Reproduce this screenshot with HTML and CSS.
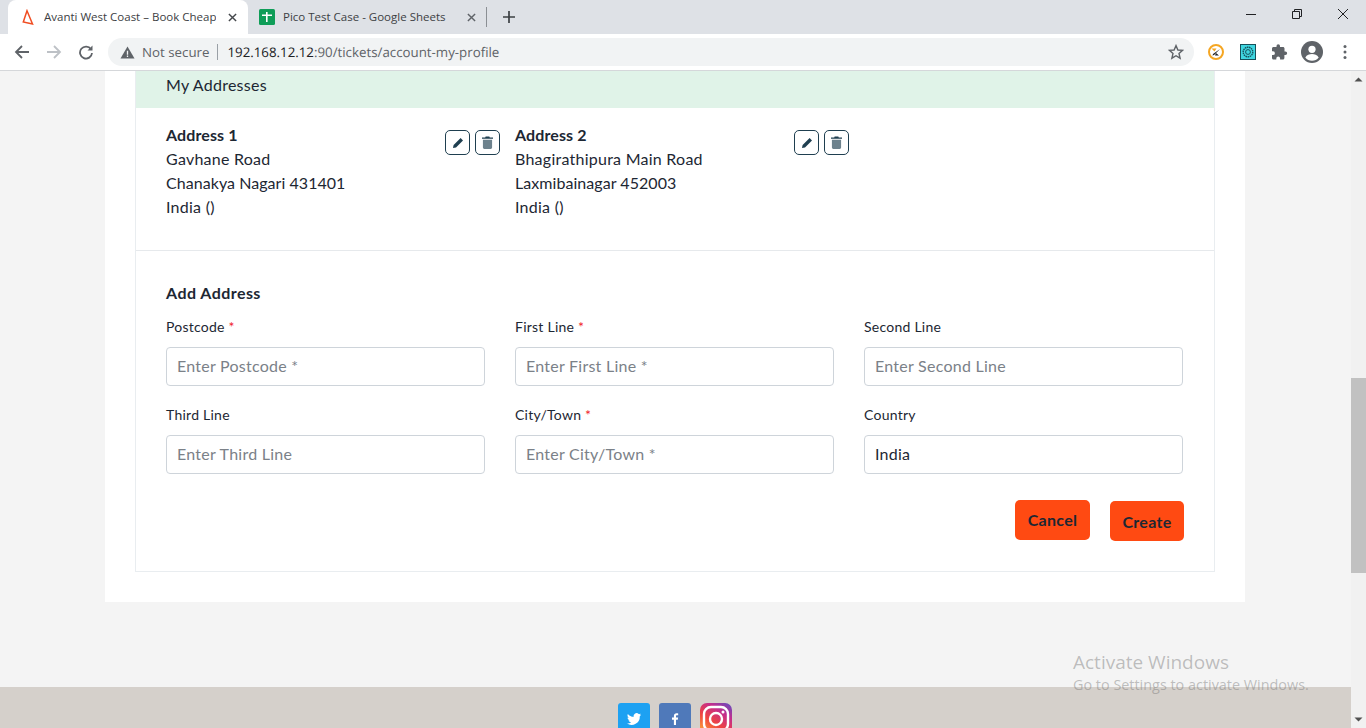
FILE: index.html
```html
<!DOCTYPE html>
<html lang="en">
<head>
    <meta charset="UTF-8">
    <meta name="viewport" content="width=device-width, initial-scale=1.0">
    <title>Avanti West Coast – My Profile</title>
    <link rel="stylesheet" href="styles.css">
</head>
<body>
    <!-- browser tabs -->
    <div class="tab-strip">
        <div class="tab tab-active">
            <svg class="favicon" viewBox="0 0 16 16"><path d="M7 1.800 3.300 13 12.500 15z" fill="none" stroke="#f04e23" stroke-width="1.500"/></svg>
            <span class="tab-title">Avanti West Coast – Book Cheap</span>
            <svg class="tab-close" viewBox="0 0 10 10"><path d="M1 1l8 8M9 1l-8 8" stroke="#45484c" stroke-width="1.600"/></svg>
        </div>
        <div class="tab tab-second">
            <svg class="favicon" viewBox="0 0 16 16"><rect width="16" height="16" rx="1.500" fill="#0f9d58"/><path d="M7 3h1.600v2.500H13v1.600H8.600V13H7V7.100H3V5.500h4z" fill="#fff"/></svg>
            <span class="tab-title">Pico Test Case - Google Sheets</span>
            <svg class="tab-close" viewBox="0 0 10 10"><path d="M1 1l8 8M9 1l-8 8" stroke="#5f6368" stroke-width="1.600"/></svg>
        </div>
        <div class="tab-sep"></div>
        <svg class="new-tab" viewBox="0 0 12 12"><path d="M6 0v12M0 6h12" stroke="#3c4043" stroke-width="1.700"/></svg>
        <div class="window-controls">
            <svg viewBox="0 0 12 12"><path d="M1 6.500h10" stroke="#202124"/></svg>
            <svg viewBox="0 0 12 12"><path d="M1.500 3.500h7v7h-7zM3.500 3.500v-2h7v7h-2" fill="none" stroke="#202124"/></svg>
            <svg viewBox="0 0 12 12"><path d="M1 1l10 10M11 1L1 11" stroke="#202124"/></svg>
        </div>
    </div>

    <!-- address bar -->
    <div class="toolbar">
        <svg class="nav-icon" viewBox="0 0 16 16"><path d="M15 8H2M8 2 2 8l6 6" fill="none" stroke="#5f6368" stroke-width="1.800"/></svg>
        <svg class="nav-icon" viewBox="0 0 16 16"><path d="M1 8h13M8 2l6 6-6 6" fill="none" stroke="#bdc1c6" stroke-width="1.800"/></svg>
        <svg class="nav-icon" viewBox="0 0 16 16"><path d="M13 5.200A6 6 0 1 0 14 9" fill="none" stroke="#5f6368" stroke-width="1.800"/><path d="M14.500 1.500v5h-5z" fill="#5f6368"/></svg>
        <div class="omnibox">
            <svg class="warn-icon" viewBox="0 0 16 16"><path d="M8 1.500 15.500 14.500H.5z" fill="#5f6368"/><path d="M7.300 6h1.400v4.500H7.300zM7.300 11.300h1.400v1.400H7.300z" fill="#f1f3f4"/></svg>
            <span class="not-secure">Not secure</span>
            <span class="omni-sep"></span>
            <span class="url"><b>192.168.12.12</b>:90/tickets/account-my-profile</span>
            <svg class="star" viewBox="0 0 16 16"><path d="M8 1.600l1.900 4.400 4.700.4-3.600 3.100 1.100 4.700L8 11.700l-4.100 2.500L5 9.500 1.400 6.400l4.700-.4z" fill="none" stroke="#5f6368" stroke-width="1.400"/></svg>
        </div>
        <div class="extensions">
            <svg class="ext" viewBox="0 0 16 16"><circle cx="8" cy="8" r="7" fill="#fff" stroke="#f5a623" stroke-width="2"/><path d="M3.500 4.500h5l-2 3z" fill="#f5a623"/><path d="M12 5 6 11l-1.500.5L5 10z M8 9l3 2.500H7z" fill="#202124"/></svg>
            <svg class="ext" viewBox="0 0 16 16"><rect x=".5" y=".5" width="15" height="15" fill="#3fd6e0" stroke="#17505a"/><circle cx="8" cy="8" r="4.800" fill="none" stroke="#17505a" stroke-width="1.400" stroke-dasharray="1.500 .6"/><circle cx="8" cy="8" r="2.400" fill="none" stroke="#17505a"/></svg>
            <svg class="ext" viewBox="0 0 16 16"><path d="M13.500 7.500h-1v-3c0-.8-.7-1.500-1.500-1.500H8V2a1.750 1.750 0 0 0-3.500 0v1h-3C.7 3 0 3.700 0 4.500v2.800h1a1.900 1.900 0 0 1 0 3.800H0v2.800c0 .8.700 1.500 1.500 1.500h2.800v-1a1.900 1.900 0 0 1 3.800 0v1h2.800c.8 0 1.500-.7 1.500-1.500V11h1a1.750 1.750 0 0 0 0-3.500z" fill="#5f6368"/></svg>
            <svg class="avatar" viewBox="0 0 22 22"><circle cx="11" cy="11" r="11" fill="#5f6368"/><circle cx="11" cy="8.300" r="3.600" fill="#fff"/><path d="M4.300 16.600c1.500-2.600 4.200-3.500 6.700-3.500s5.200.9 6.700 3.500a8.600 8.600 0 0 1-13.400 0z" fill="#fff"/></svg>
            <svg class="menu-dots" viewBox="0 0 4 16"><circle cx="2" cy="2.500" r="1.500" fill="#5f6368"/><circle cx="2" cy="8" r="1.500" fill="#5f6368"/><circle cx="2" cy="13.500" r="1.500" fill="#5f6368"/></svg>
        </div>
    </div>

    <div class="viewport">
        <div class="page">
            <div class="container">
                <div class="card">
                    <div class="card-head">My Addresses</div>
                    <div class="address-list">
                        <div class="address">
                            <div class="address-text">
                                <strong>Address 1</strong>
                                <div>Gavhane Road</div>
                                <div class="address-postal">Chanakya Nagari 431401</div>
                                <div>India ()</div>
                            </div>
                            <div class="address-actions">
                                <button class="icon-btn"><svg viewBox="0 0 12 12"><path d="M8.600 1 11 3.400 4 10.400 1 11l.6-3z" fill="#1f3f50"/></svg></button>
                                <button class="icon-btn"><svg class="trash" viewBox="0 0 12 14"><path d="M4 .5h4l.5 1H12V3H0V1.500h3.500z" fill="#1f3f50"/><path d="M1 4h10v8.500a1.500 1.500 0 0 1-1.500 1.500h-7A1.500 1.500 0 0 1 1 12.500z" fill="#1f3f50" opacity=".65"/></svg></button>
                            </div>
                        </div>
                        <div class="address">
                            <div class="address-text">
                                <strong>Address 2</strong>
                                <div>Bhagirathipura Main Road</div>
                                <div class="address-postal">Laxmibainagar 452003</div>
                                <div>India ()</div>
                            </div>
                            <div class="address-actions">
                                <button class="icon-btn"><svg viewBox="0 0 12 12"><path d="M8.600 1 11 3.400 4 10.400 1 11l.6-3z" fill="#1f3f50"/></svg></button>
                                <button class="icon-btn"><svg class="trash" viewBox="0 0 12 14"><path d="M4 .5h4l.5 1H12V3H0V1.500h3.500z" fill="#1f3f50"/><path d="M1 4h10v8.500a1.500 1.500 0 0 1-1.500 1.500h-7A1.500 1.500 0 0 1 1 12.500z" fill="#1f3f50" opacity=".65"/></svg></button>
                            </div>
                        </div>
                    </div>
                    <form class="add-address">
                        <h3>Add Address</h3>
                        <div class="field-grid">
                            <div class="field">
                                <label>Postcode <span class="req">*</span></label>
                                <input type="text" placeholder="Enter Postcode *">
                            </div>
                            <div class="field">
                                <label>First Line <span class="req">*</span></label>
                                <input type="text" placeholder="Enter First Line *">
                            </div>
                            <div class="field">
                                <label>Second Line</label>
                                <input type="text" placeholder="Enter Second Line">
                            </div>
                            <div class="field">
                                <label>Third Line</label>
                                <input type="text" placeholder="Enter Third Line">
                            </div>
                            <div class="field">
                                <label>City/Town <span class="req">*</span></label>
                                <input type="text" placeholder="Enter City/Town *">
                            </div>
                            <div class="field">
                                <label>Country</label>
                                <input type="text" value="India">
                            </div>
                        </div>
                        <div class="form-actions">
                            <button type="button" class="btn btn-cancel">Cancel</button>
                            <button type="button" class="btn btn-create">Create</button>
                        </div>
                    </form>
                </div>
            </div>
            <div class="footer">
                <div class="social social-tw">
                    <svg viewBox="0 0 16 16"><path d="M15 3.500c-.5.300-1.100.400-1.700.500.6-.4 1-.9 1.200-1.600-.6.300-1.200.6-1.800.7a2.900 2.900 0 0 0-5 2.700C5.300 5.700 3.200 4.600 1.900 2.900c-.8 1.300-.4 3 .9 3.900-.5 0-.9-.1-1.300-.4 0 1.400 1 2.600 2.300 2.900-.4.100-.9.100-1.300 0 .4 1.200 1.500 2 2.700 2A5.900 5.900 0 0 1 1 12.500 8.300 8.300 0 0 0 13.800 5.200c.5-.4 1-1 1.200-1.700z" fill="#fff"/></svg>
                </div>
                <div class="social social-fb">
                    <svg viewBox="0 0 16 16"><path d="M9 14V8.700h1.800l.3-2.100H9V5.300c0-.6.200-1 1-1h1.200V2.400C11 2.400 10.300 2.300 9.600 2.300 8 2.300 6.900 3.300 6.900 5v1.600H5v2.100h1.900V14z" fill="#fff"/></svg>
                </div>
                <div class="social social-ig">
                    <svg viewBox="0 0 32 32"><rect x="4" y="4" width="24" height="24" rx="7" fill="none" stroke="#fff" stroke-width="2.400"/><circle cx="16" cy="16" r="6" fill="none" stroke="#fff" stroke-width="2.400"/><circle cx="23" cy="9" r="1.500" fill="#fff"/></svg>
                </div>
            </div>
        </div>
        <div class="scrollbar">
            <svg class="scroll-arrow" viewBox="0 0 15 17"><path d="M3.500 10.500h8l-4-4z" fill="#505050"/></svg>
            <div class="scroll-thumb"></div>
            <svg class="scroll-arrow" viewBox="0 0 15 17"><path d="M3.500 6.500h8l-4 4z" fill="#505050"/></svg>
        </div>
        <div class="watermark">
            <div class="wm-title">Activate Windows</div>
            <div class="wm-sub">Go to Settings to activate Windows.</div>
        </div>
    </div>
</body>
</html>
```

FILE: styles.css
```css
* {
    box-sizing: border-box;
}
html, body {
    height: 100%;
    margin: 0;
    overflow: hidden;
}
body {
    font-family: Lato, "Open Sans", sans-serif;
    display: flex;
    flex-direction: column;
    color: #1d2733;
    background-color: #f4f4f4;
}

/* browser chrome */
.tab-strip {
    height: 34px;
    background-color: #dee1e6;
    display: flex;
    align-items: center;
    padding-left: 8px;
    flex: none;
    font-family: "Open Sans", sans-serif;
    font-size: 11.500px;
    color: #3c4043;
}
.tab {
    width: 240px;
    height: 34px;
    display: flex;
    align-items: center;
    padding-left: 12px;
}
.tab-second {
    width: 239px;
    padding-left: 11px;
}
.tab-active {
    background-color: #fff;
    border-radius: 8px 8px 0 0;
}
.favicon {
    width: 16px;
    height: 16px;
    flex: none;
}
.tab-title {
    margin-left: 8px;
    margin-bottom: 2px;
    width: 172px;
    white-space: nowrap;
    overflow: hidden;
    flex: none;
}
.tab-close {
    width: 9px;
    height: 9px;
    margin-left: 12px;
    flex: none;
}
.tab-sep {
    width: 1px;
    height: 20px;
    background-color: #8b8f94;
    margin-left: -1px;
}
.new-tab {
    width: 12px;
    height: 12px;
    margin-left: 16px;
}
.window-controls {
    margin-left: auto;
    display: flex;
    gap: 34px;
    padding-right: 17px;
    margin-top: -6px;
}
.window-controls svg {
    width: 12px;
    height: 12px;
}
.toolbar {
    height: 37px;
    background-color: #fff;
    border-bottom: 1px solid #d5d7da;
    display: flex;
    align-items: center;
    padding-left: 14px;
    flex: none;
    font-family: "Open Sans", sans-serif;
}
.nav-icon {
    width: 16px;
    height: 16px;
    margin-right: 16px;
    flex: none;
}
.omnibox {
    width: 1086px;
    height: 28px;
    margin-left: -2px;
    background-color: #f1f3f4;
    border-radius: 14px;
    display: flex;
    align-items: center;
    padding-left: 12px;
    font-size: 13.300px;
    color: #5f6368;
}
.warn-icon {
    width: 15px;
    height: 15px;
}
.not-secure {
    margin-left: 7px;
}
.omni-sep {
    width: 1px;
    height: 16px;
    background-color: #9aa0a6;
    margin: 0 9px 0 8px;
}
.url {
    text-rendering: geometricPrecision;
}
.url b {
    font-weight: 400;
    color: #202124;
}
.star {
    width: 16px;
    height: 16px;
    margin-left: auto;
    margin-right: 10px;
}
.extensions {
    display: flex;
    align-items: center;
    margin-left: 14px;
}
.ext {
    width: 16px;
    height: 16px;
    margin-right: 16px;
}
.avatar {
    width: 22px;
    height: 22px;
    margin-left: -3px;
}
.menu-dots {
    width: 4px;
    height: 16px;
    margin-left: 20px;
}

/* page */
.viewport {
    flex: 1;
    display: flex;
    min-height: 0;
    position: relative;
}
.page {
    flex: 1;
    overflow: hidden;
    display: flex;
    flex-direction: column;
}
.container {
    width: 1140px;
    margin-left: 105px;
    background-color: #fff;
    padding: 0 30px 30px;
    letter-spacing: .25px;
}
.card {
    border: 1px solid #e9edf0;
    border-top: none;
}
.card-head {
    height: 37px;
    background-color: #e0f3e8;
    padding: 1px 30px 0;
    font-size: 16px;
    line-height: 26px;
}
.address-list {
    display: flex;
    padding: 15px 30px 31px;
    border-bottom: 1px solid #e6e9ec;
}
.address {
    width: 349px;
    display: flex;
    font-size: 16px;
    line-height: 24px;
}
.address strong {
    letter-spacing: .1px;
}
.address-postal {
    letter-spacing: .05px;
}
.address-text {
    width: 279px;
}
.address-actions {
    display: flex;
    gap: 5px;
    padding-top: 7px;
}
.icon-btn {
    width: 25px;
    height: 25px;
    padding: 0;
    background-color: #fff;
    border: 1px solid #1f3f50;
    border-radius: 5px;
    display: flex;
    align-items: center;
    justify-content: center;
}
.icon-btn svg {
    width: 12px;
    height: 12px;
}
.icon-btn .trash {
    width: 11px;
    height: 13px;
}
.add-address {
    padding: 29px 31px 30px 30px;
}
.add-address h3 {
    margin: 0 0 10px;
    font-size: 16px;
    line-height: 26px;
    font-weight: 700;
    letter-spacing: .45px;
}
.field-grid {
    display: grid;
    grid-template-columns: repeat(3, 319px);
    column-gap: 30px;
    row-gap: 18px;
}
.field {
    display: flex;
    flex-direction: column;
}
.field label {
    font-size: 14px;
    line-height: 22px;
    margin-bottom: 9px;
    letter-spacing: .25px;
}
.req {
    color: #f01e2c;
}
.field input {
    height: 39px;
    padding: 0 10px 2px;
    border: 1px solid #ced4da;
    border-radius: 4px;
    font-family: inherit;
    font-size: 16px;
    letter-spacing: .25px;
    color: #1d2733;
    background-color: #fff;
}
.field input::placeholder {
    color: #7b8188;
    opacity: 1;
}
.form-actions {
    display: flex;
    justify-content: flex-end;
    margin-top: 26px;
    margin-right: -1px;
}
.btn {
    height: 40px;
    border: none;
    border-radius: 5px;
    background-color: #ff4a12;
    color: #1d2733;
    font-family: inherit;
    font-size: 16px;
    font-weight: 700;
    letter-spacing: .3px;
    padding: 0 0 2px;
}
.btn-cancel {
    width: 75px;
    margin-right: 20px;
}
.btn-create {
    width: 74px;
    margin-top: 1px;
    padding: 2px 0 2px;
}

/* footer, cut by the window */
.footer {
    margin-top: 85px;
    flex: 1;
    background-color: #d5d0cb;
    display: flex;
    justify-content: center;
    gap: 9px;
    padding-top: 16px;
    padding-right: 2px;
}
.social {
    width: 32px;
    height: 32px;
    border-radius: 3px;
    flex: none;
    display: flex;
    align-items: center;
    justify-content: center;
}
.social-tw {
    background-color: #1da1f2;
}
.social-fb {
    background-color: #4f79ba;
}
.social-ig {
    border-radius: 7px;
    background: linear-gradient(35deg, #fdb03a 5%, #f0443e 40%, #c42d8c 70%, #5b4fc4 100%);
}
.social svg {
    width: 16px;
    height: 16px;
}
.social-ig svg {
    width: 32px;
    height: 32px;
}

/* scrollbar */
.scrollbar {
    width: 15px;
    flex: none;
    background-color: #f1f1f1;
    display: flex;
    flex-direction: column;
}
.scroll-arrow {
    width: 15px;
    height: 17px;
    flex: none;
}
.scroll-thumb {
    height: 195px;
    margin-top: 290px;
    margin-bottom: auto;
    background-color: #c1c1c1;
}

/* windows watermark lies over the page */
.watermark {
    position: absolute;
    left: 1073px;
    top: 578px;
    font-family: "Open Sans", sans-serif;
    color: rgba(120, 120, 120, 0.45);
}
.wm-title {
    font-size: 19px;
    line-height: 26px;
}
.wm-sub {
    font-size: 14.400px;
    line-height: 19px;
}
```
